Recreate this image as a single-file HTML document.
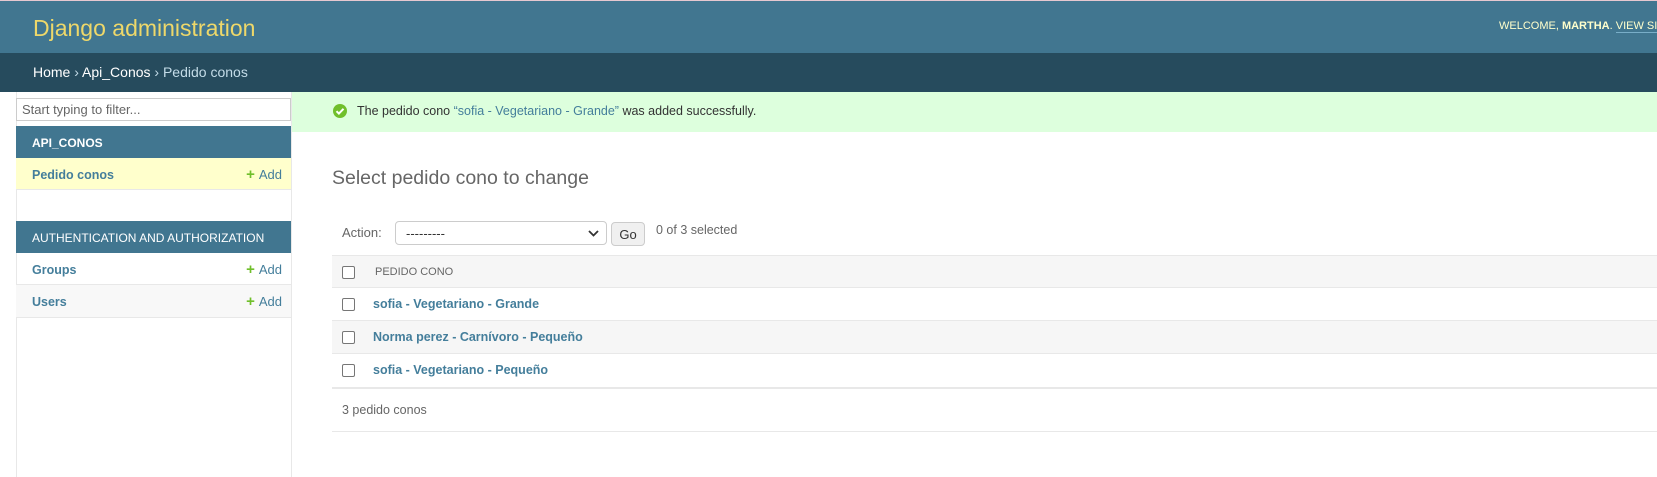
<!DOCTYPE html>
<html><head><meta charset="utf-8"><style>
*{box-sizing:border-box;margin:0;padding:0}
body{width:1657px;height:477px;overflow:hidden;background:#fff;font-family:"Liberation Sans",sans-serif;font-size:13px;color:#333;position:relative}
.a{position:absolute}
a{color:#447e9b;text-decoration:none}
#hdr{left:0;top:0;width:1657px;height:53px;background:#417690;border-top:1px solid #e6c8d0}
#bc{left:0;top:53px;width:1657px;height:39px;background:#264b5d;color:#c4dce8;font-size:14px;padding:11px 0 0 33px}
#bc b{font-weight:normal;color:#fff}
.row{position:absolute;left:16px;width:275px;height:32px;border-bottom:1px solid #e8e8e8;padding:9px 0 0 16px;font-size:13px}
.row a.n{color:#447e9b;font-weight:bold;font-size:12.5px}
.add{position:absolute;right:9px;top:8px;color:#447e9b;font-size:13px}
.add i{color:#70bf2b;font-style:normal;font-weight:bold;font-size:15px;margin-right:4px}
.cap{position:absolute;left:16px;width:275px;height:32px;background:#417690;color:#fff;font-size:12px;padding:10px 0 0 16px}
.tr{position:absolute;left:332px;width:1325px;height:33px;border-bottom:1px solid #e8e8e8}
.cb{position:absolute;left:10px;top:10px;width:13px;height:13px;border:1px solid #767676;border-radius:2px;background:#fff}
.tr a{position:absolute;left:41px;top:9px;font-weight:bold;font-size:12.5px}
</style></head><body>
<div id="hdr" class="a"><span class="a" style="left:33px;top:14px;font-size:23px;color:#eed86a">Django administration</span>
<span class="a" style="left:1499px;top:19px;font-size:11px;color:#ffc;white-space:nowrap">WELCOME, <b>MARTHA</b>. <span style="border-bottom:1px solid #79aec8">VIEW SITE</span></span></div>
<div id="bc" class="a"><b>Home</b> › <b>Api_Conos</b> › Pedido conos</div>

<div class="a" style="left:291px;top:92px;width:1px;height:385px;background:#e8e8e8"></div>
<div class="a" style="left:16px;top:92px;width:1px;height:385px;background:#e8e8e8"></div>
<div class="a" style="left:16px;top:98px;width:275px;height:23px;border:1px solid #ccc;padding:3px 5px;color:#666;font-size:13px">Start typing to filter...</div>
<div class="cap" style="top:126px;font-weight:bold">API_CONOS</div>
<div class="row" style="top:158px;background:#ffc"><a class="n">Pedido conos</a><span class="add"><i>+</i>Add</span></div>
<div class="cap" style="top:221px">AUTHENTICATION AND AUTHORIZATION</div>
<div class="row" style="top:253px"><a class="n">Groups</a><span class="add"><i>+</i>Add</span></div>
<div class="row" style="top:285px;background:#f8f8f8;height:33px"><a class="n">Users</a><span class="add"><i>+</i>Add</span></div>

<div class="a" style="left:292px;top:92px;width:1365px;height:40px;background:#dfd;padding:12px 0 0 65px;font-size:12.5px;color:#333">The pedido cono <a>“sofia - Vegetariano - Grande”</a> was added successfully.</div>
<svg class="a" style="left:333px;top:104px" width="14" height="14" viewBox="0 0 14 14"><circle cx="7" cy="7" r="7" fill="#70bf2b"/><path d="M3.5 7.2l2.4 2.4 4.6-4.8" stroke="#fff" stroke-width="2" fill="none"/></svg>
<div class="a" style="left:332px;top:167px;font-size:19.5px;color:#666;font-weight:300">Select pedido cono to change</div>

<div class="a" style="left:342px;top:225px;color:#666;font-size:13px">Action:</div>
<div class="a" style="left:395px;top:221px;width:212px;height:24px;border:1px solid #ccc;border-radius:4px;padding:4px 10px;font-size:13px">---------<svg style="position:absolute;right:7px;top:8px" width="11" height="7"><path d="M1 1l4.5 4.5L10 1" stroke="#333" stroke-width="1.8" fill="none"/></svg></div>
<div class="a" style="left:611px;top:222px;width:34px;height:24px;border:1px solid #ccc;border-radius:4px;background:#f0f0f0;font-size:13px;text-align:center;padding-top:4px">Go</div>
<div class="a" style="left:656px;top:223px;color:#666;font-size:12.5px">0 of 3 selected</div>

<div class="tr" style="top:255px;background:#f6f6f6;border-top:1px solid #e8e8e8"><span class="cb"></span><span class="a" style="left:43px;top:10px;font-size:11px;color:#666">PEDIDO CONO</span></div>
<div class="tr" style="top:288px"><span class="cb"></span><a>sofia - Vegetariano - Grande</a></div>
<div class="tr" style="top:321px;background:#f6f6f6"><span class="cb"></span><a>Norma perez - Carnívoro - Pequeño</a></div>
<div class="tr" style="top:354px;border-bottom:2px solid #e8e8e8;height:35px"><span class="cb"></span><a>sofia - Vegetariano - Pequeño</a></div>
<div class="a" style="left:332px;top:389px;width:1325px;height:43px;border-bottom:1px solid #e8e8e8;padding:14px 0 0 10px;color:#666;font-size:12.5px">3 pedido conos</div>
</body></html>
